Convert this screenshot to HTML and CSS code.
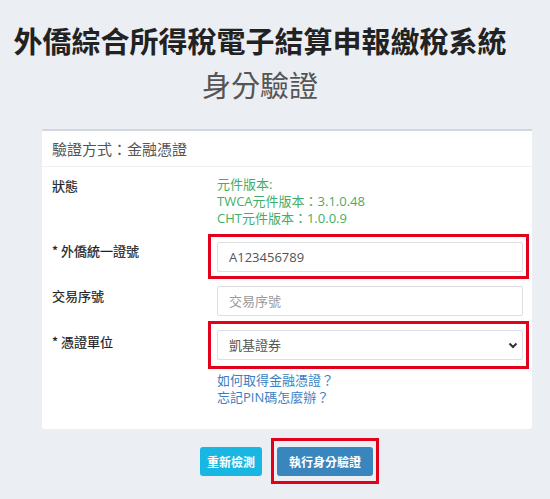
FILE: index.html
```html
<!DOCTYPE html>
<html lang="zh-Hant">
<head>
    <meta charset="UTF-8">
    <title>身分驗證</title>
    <link rel="stylesheet" href="styles.css">
</head>
<body>
    <div class="titulo">
        <h1>外僑綜合所得稅電子結算申報繳稅系統</h1>
        <h2>身分驗證</h2>
    </div>

    <div class="cartao">
        <div class="cartao-topo">驗證方式：金融憑證</div>
        <div class="cartao-corpo">
            <div class="linha">
                <div class="rotulo">狀態</div>
                <div class="status">
                    元件版本:<br>
                    TWCA元件版本：3.1.0.48<br>
                    CHT元件版本：1.0.0.9
                </div>
            </div>
            <div class="linha">
                <div class="rotulo rotulo-marcado">* 外僑統一證號</div>
                <div class="marca">
                    <input type="text" class="campo" value="A123456789">
                </div>
            </div>
            <div class="linha">
                <div class="rotulo">交易序號</div>
                <div>
                    <input type="text" class="campo" placeholder="交易序號">
                </div>
            </div>
            <div class="linha">
                <div class="rotulo rotulo-marcado2">* 憑證單位</div>
                <div class="marca marca2">
                    <div class="caixa-select">
                        <select class="campo">
                            <option>凱基證券</option>
                        </select>
                        <svg class="seta" width="10" height="7" viewBox="0 0 10 7">
                            <path d="M1.5 1.5 L5 5 L8.5 1.5" fill="none" stroke="#333" stroke-width="2"/>
                        </svg>
                    </div>
                </div>
            </div>
            <div class="linha">
                <div></div>
                <div class="links">
                    <a href="#">如何取得金融憑證？</a><br>
                    <a href="#">忘記PIN碼怎麼辦？</a>
                </div>
            </div>
        </div>
    </div>

    <div class="botoes">
        <button type="button" class="btn btn-info">重新檢測</button>
        <div class="marca-btn">
            <button type="button" class="btn btn-azul">執行身分驗證</button>
        </div>
    </div>
</body>
</html>
```

FILE: styles.css
```css
* { box-sizing:border-box; }
body {
    margin:0;
    background-color:#ebeef3;
    font-family:"Open Sans", "Noto Sans CJK TC", sans-serif;
    color:#333;
}
.titulo {
    width:520px;
    text-align:center;
    padding-top:20px;
}
h1 {
    margin:0;
    font-family:"Noto Sans CJK TC", sans-serif;
    font-size:29px;
    line-height:40px;
    font-weight:bold;
    color:#222;
}
h2 {
    margin:4px 0 0 0;
    font-family:"Noto Sans CJK TC", sans-serif;
    font-size:29px;
    line-height:40px;
    font-weight:normal;
    color:#555;
}
.cartao {
    margin:25px 0 0 42px;
    width:490px;
    background-color:#fff;
    border-top:2px solid #d3d7dd;
    border-radius:0 0 3px 3px;
}
.cartao-topo {
    height:36px;
    padding:0 10px;
    line-height:36px;
    font-family:"Noto Sans CJK TC", sans-serif;
    font-size:15px;
    color:#555;
    border-bottom:1px solid #eef0f3;
}
.cartao-corpo {
    padding:9px 9px 16px 10px;
}
.linha {
    display:grid;
    grid-template-columns:165px 1fr;
    margin-bottom:7px;
}
.rotulo {
    font-family:"Noto Sans CJK TC", sans-serif;
    font-size:13px;
    line-height:17px;
    font-weight:normal;
    color:#222;
    padding-top:1px;
    -webkit-text-stroke:0.2px #222;
}
.rotulo-marcado { padding-top:8px; }
.rotulo-marcado2 { padding-top:10px; }
.status {
    font-size:13px;
    line-height:17px;
    color:#3fae6a;
}
.marca {
    border:3px solid #e3001b;
    margin:0 -6px 0 -9px;
    padding:5px 3px 4px 6px;
}
.marca2 {
    padding:6px 3px 6px 6px;
    margin-top:-2px;
}
.campo {
    display:block;
    width:100%;
    height:30px;
    border:1px solid #dcdfe4;
    border-radius:2px;
    padding:0 11px;
    font-family:"Open Sans", "Noto Sans CJK TC", sans-serif;
    font-size:13px;
    color:#555;
    background-color:#fff;
    outline:none;
}
.campo::placeholder { color:#999; }
select.campo {
    appearance:none;
    -webkit-appearance:none;
}
.caixa-select { position:relative; }
.seta {
    position:absolute;
    right:5px;
    top:12px;
}
.links {
    margin-top:-4px;
    font-size:13px;
    line-height:17px;
}
.links a {
    color:#3a7fc1;
    text-decoration:none;
}
.botoes {
    width:490px;
    margin:9px 0 0 42px;
    display:flex;
    justify-content:center;
    align-items:center;
    gap:9px;
    padding-left:5px;
}
.btn {
    border:none;
    height:29px;
    border-radius:3px;
    color:#fff;
    font-family:"Noto Sans CJK TC", sans-serif;
    font-size:12px;
    font-weight:bold;
    cursor:pointer;
}
.btn-info { background-color:#17b6e3; padding:0 7px; width:62px; }
.btn-azul { background-color:#3985bd; padding:0 12px; width:96px; }
.marca-btn {
    border:3px solid #e3001b;
    padding:6px 3px 5px 3px;
}
.marca-btn .btn { display:block; }
```
